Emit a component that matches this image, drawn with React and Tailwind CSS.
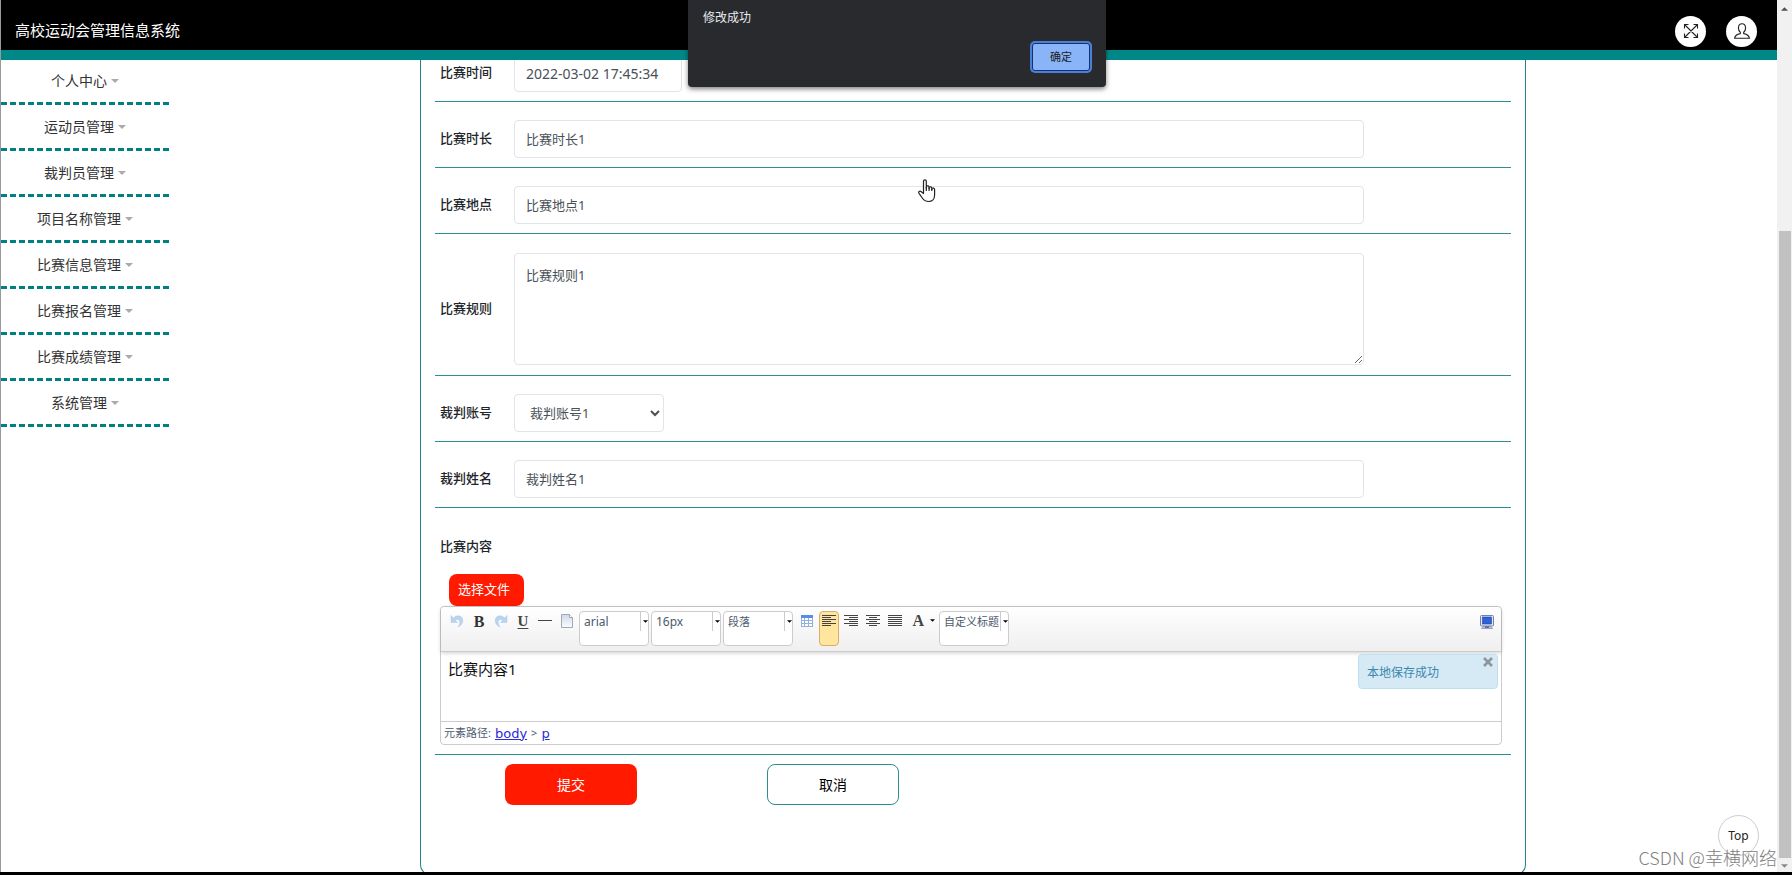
import React from "react";

const MENU = [
  "个人中心",
  "运动员管理",
  "裁判员管理",
  "项目名称管理",
  "比赛信息管理",
  "比赛报名管理",
  "比赛成绩管理",
  "系统管理",
];

function Caret({ className }) {
  return (
    <svg viewBox="0 0 8 4" className={className} fill="currentColor" aria-hidden="true">
      <path d="M0 0h8L4 4z" />
    </svg>
  );
}

function Header() {
  return (
    <header className="flex h-[60px] shrink-0 items-center justify-between border-b-[10px] border-[#008888] bg-black pt-[10px] pr-5 pl-[14px]">
      <h1 className="text-[15px] text-white">高校运动会管理信息系统</h1>
      <div className="flex items-center gap-5 pt-[2px]">
        <button aria-label="全屏" className="flex size-[31px] items-center justify-center rounded-full bg-white">
          <svg viewBox="0 0 16 16" className="size-4" fill="none" stroke="#222" strokeWidth="1.1">
            <path d="M1.5 1.5l13 13M14.5 1.5l-13 13M1.5 5.5v-4h4M10.5 1.5h4v4M14.5 10.5v4h-4M5.500 14.500h-4v-4" />
          </svg>
        </button>
        <button aria-label="用户" className="flex size-[31px] items-center justify-center rounded-full bg-white">
          <svg viewBox="0 0 16 16" className="size-4" fill="none" stroke="#222" strokeWidth="1.1">
            <path d="M6.300 9.300C5 8.300 4.300 6.500 4.500 4.300 4.700 1.800 6 .8 8 .8s3.300 1 3.500 3.500c.2 2.200-.5 4-1.800 5v1.300c3.500.7 5.300 2 5.700 4.600H.6c.4-2.600 2.200-3.900 5.700-4.600z" />
          </svg>
        </button>
      </div>
    </header>
  );
}

function Sidebar() {
  return (
    <nav className="-mt-px w-[168px] shrink-0">
      <ul>
        {MENU.map((m) => (
          <li key={m} className="h-[46px] border-b-[3px] border-dashed border-[#008080]">
            <button className="flex h-full w-full items-center justify-center gap-1 text-[14px] text-[#333]">
              {m}
              <Caret className="h-1 w-2 text-[#aaa]" />
            </button>
          </li>
        ))}
      </ul>
    </nav>
  );
}

const FIELD = "rounded border border-[#e2e4e8] bg-white px-[11px] text-[#495057] outline-none";

function Row({ id, label, tall, children }) {
  return (
    <div
      className={
        "flex shrink-0 items-center border-b border-[#2b8f8f] pt-[18px] pr-[147px] pb-[9px] pl-[5px] " +
        (tall ? "h-[142px]" : "h-[66px]")
      }
    >
      <label htmlFor={id} className="w-[74px] shrink-0 text-[13px] font-medium text-[#212529]">
        {label}
      </label>
      {children}
    </div>
  );
}

function Combo({ label, value, textSize = "text-[12px]" }) {
  return (
    <div className="mr-0.5 flex h-[35px] w-[70px] shrink-0 items-start rounded-sm border border-[#ccc] bg-white">
      <select
        aria-label={label}
        className={"h-[19px] w-[60px] appearance-none overflow-hidden bg-transparent pl-1 leading-[19px] text-[#4b5a6e] outline-none " + textSize}
      >
        <option>{value}</option>
      </select>
      <span className="flex h-[19px] w-2 shrink-0 items-center justify-end border-l border-[#ccc]">
        <Caret className="h-[3px] w-[5px] text-black" />
      </span>
    </div>
  );
}

function Tool({ label, active, children }) {
  return (
    <button
      type="button"
      aria-label={label}
      className={
        "mr-[2px] flex h-[35px] w-5 shrink-0 items-start justify-center rounded-sm border pt-[2px] " +
        (active ? "border-[#dcac6c] bg-[#ffe69f]" : "border-transparent")
      }
    >
      {children}
    </button>
  );
}

function Lines({ d }) {
  return (
    <svg viewBox="0 0 14 14" className="size-[14px]" stroke="#444" strokeWidth="1" fill="none" shapeRendering="crispEdges">
      <path d={d} />
    </svg>
  );
}

function UndoShape() {
  return <path d="M1 1.500v7h6.500L5.300 6.200C7.500 4.500 10 5.600 9.800 8.500 9.700 10.500 9 11.800 8 13c3-1.300 4.800-3.500 4.800-6.500C12.800 1.600 7.300.3 3.300 4z" fill="#b9d4f1" stroke="#9fc0e6" strokeWidth=".4" />;
}

function Toolbar() {
  return (
    <div className="flex h-[45px] items-start rounded-t border-b border-[#ccc] bg-linear-to-b from-white to-[#efefef] pt-1 pr-[7px] pl-[6px] shadow-[0_1px_4px_rgba(0,0,0,0.2)]">
      <Tool label="撤销">
        <svg viewBox="0 0 14 14" className="size-[14px]"><UndoShape /></svg>
      </Tool>
      <Tool label="加粗">
        <span className="font-['Liberation_Serif',serif] text-[16px] leading-[15px] font-bold text-[#333]">B</span>
      </Tool>
      <Tool label="重做">
        <svg viewBox="0 0 14 14" className="size-[14px]"><g transform="matrix(-1 0 0 1 14 0)"><UndoShape /></g></svg>
      </Tool>
      <Tool label="下划线">
        <span className="font-['Liberation_Serif',serif] text-[15px] leading-[15px] font-bold text-[#444] underline underline-offset-2">U</span>
      </Tool>
      <Tool label="分隔线"><Lines d="M0 6.500h14" /></Tool>
      <Tool label="清空文档">
        <svg viewBox="0 0 14 14" className="size-[14px]">
          <defs>
            <linearGradient id="doc" x1="0" y1="0" x2="0" y2="1">
              <stop offset="0" stopColor="#cfd9ea" />
              <stop offset="1" stopColor="#fbfcfe" />
            </linearGradient>
          </defs>
          <path d="M1.500.5h8l3 3v10h-11z" fill="url(#doc)" stroke="#a3a8b3" />
          <path d="M9.500.5v3h3" fill="#fff" stroke="#a3a8b3" />
        </svg>
      </Tool>
      <Combo label="字体" value="arial" />
      <Combo label="字号" value="16px" />
      <Combo label="段落格式" value="段落" textSize="text-[11px]" />
      <span className="w-[2px] shrink-0" />
      <Tool label="插入表格">
        <svg viewBox="0 0 14 14" className="size-[14px]" shapeRendering="crispEdges">
          <path d="M1 1h12v12H1z" fill="#fff" />
          <path d="M1 6.500h12M1 9.500h12M4.500 4v9M8.500 4v9M1.500 3v10M1 12.500h12M12.500 3v10" stroke="#8fb0e0" fill="none" />
          <path d="M1 1h12v3H1z" fill="#5b8be6" />
        </svg>
      </Tool>
      <Tool label="左对齐" active><Lines d="M0 1.500h14M0 3.500h9M0 5.500h14M0 7.500h9M0 9.500h14M0 11.500h9" /></Tool>
      <Tool label="右对齐"><Lines d="M0 1.500h14M5 3.500h9M0 5.500h14M5 7.500h9M0 9.500h14M5 11.500h9" /></Tool>
      <Tool label="居中"><Lines d="M0 1.500h14M3 3.500h8M0 5.500h14M3 7.500h8M0 9.500h14M3 11.500h8" /></Tool>
      <Tool label="两端对齐"><Lines d="M0 1.500h14M0 3.500h14M0 5.500h14M0 7.500h14M0 9.500h14M0 11.500h14" /></Tool>
      <button type="button" aria-label="字体颜色" className="mr-1 flex h-[19px] w-[28px] shrink-0 items-center justify-end gap-1.5 font-['Liberation_Serif',serif] text-[16px] leading-[19px] font-bold text-[#444]">
        A
        <Caret className="h-[3px] w-[5px] text-black" />
      </button>
      <Combo label="自定义标题" value="自定义标题" textSize="text-[11px]" />
      <button type="button" aria-label="全屏编辑" className="ml-auto h-[18px] pt-[3px]">
        <svg viewBox="0 0 14 14" className="size-[14px]">
          <rect x=".5" y=".5" width="13" height="10.500" rx="1" fill="#e4e8f2" stroke="#7482a8" />
          <rect x="2.500" y="2" width="9" height="7" fill="#2f62d9" stroke="#2243a0" strokeWidth=".6" />
          <path d="M3 11.500h8l1.500 2h-11z" fill="#bcc4d6" stroke="#7482a8" strokeWidth=".6" />
          <path d="M5 12.200h4" stroke="#2243a0" />
        </svg>
      </button>
    </div>
  );
}

function Editor() {
  return (
    <div className="h-[139px] rounded border border-[#ccc] bg-white">
      <Toolbar />
      <div className="flex h-[69px] items-start justify-between pt-[2px] pr-[3px] pl-[7px]">
        <p className="pt-[3px] text-[15px] leading-6 text-[#111]">比赛内容1</p>
        <div className="flex h-[35px] w-[140px] items-start justify-between rounded-sm border border-[#bce0f0] bg-[#d6eaf6] pr-[4px] pl-2">
          <span className="text-[12px] leading-[35px] text-[#3a87ad]">本地保存成功</span>
          <button type="button" aria-label="关闭" className="pt-[2px]">
            <svg viewBox="0 0 10 10" className="size-[10px]" stroke="#8f9498" strokeWidth="2.600">
              <path d="M1 1l8 8M9 1l-8 8" />
            </svg>
          </button>
        </div>
      </div>
      <div className="flex h-[24px] items-center gap-1 border-t border-[#ccc] px-[3px] text-[11px] text-[#4b5a6e]">
        <span>元素路径:</span>
        <a href="#body" className="font-['DejaVu_Sans',sans-serif] text-[13px] text-[#2a2ad8] underline">body</a>
        <span>&gt;</span>
        <a href="#p" className="font-['DejaVu_Sans',sans-serif] text-[13px] text-[#2a2ad8] underline">p</a>
      </div>
    </div>
  );
}

function Panel() {
  return (
    <form className="mx-[251px] -mt-[24px] -mb-[3px] flex flex-1 flex-col rounded-b-[10px] border-x border-b border-[#2b8080] px-[14px]">
      <Row id="time" label="比赛时间">
        <input id="time" defaultValue="2022-03-02 17:45:34" className={"h-[38px] w-[168px] text-[14px] " + FIELD} />
      </Row>
      <Row id="duration" label="比赛时长">
        <input id="duration" defaultValue="比赛时长1" className={"h-[38px] min-w-0 flex-1 pb-[2px] text-[13px] " + FIELD} />
      </Row>
      <Row id="place" label="比赛地点">
        <input id="place" defaultValue="比赛地点1" className={"h-[38px] min-w-0 flex-1 pb-[2px] text-[13px] " + FIELD} />
      </Row>
      <Row id="rules" label="比赛规则" tall>
        <textarea id="rules" defaultValue="比赛规则1" className={"h-[112px] min-w-0 flex-1 resize pt-3 text-[13px] " + FIELD} />
      </Row>
      <Row id="account" label="裁判账号">
        <select id="account" className={"h-[38px] w-[150px] text-[13px] " + FIELD}>
          <option>裁判账号1</option>
        </select>
      </Row>
      <Row id="judge" label="裁判姓名">
        <input id="judge" defaultValue="裁判姓名1" className={"h-[38px] min-w-0 flex-1 pb-[2px] text-[13px] " + FIELD} />
      </Row>
      <div className="shrink-0 border-b border-[#2b8f8f] pt-[28px] pr-[9px] pb-[9px] pl-[5px]">
        <div className="text-[13px] leading-5 font-medium text-[#212529]">比赛内容</div>
        <button type="button" className="mt-[18px] ml-[9px] block h-8 w-[75px] rounded-lg bg-[#ff1a00] pl-[9px] text-left text-[13px] text-white">
          选择文件
        </button>
        <Editor />
      </div>
      <div className="mt-[9px] flex gap-[130px] pl-[70px]">
        <button type="button" className="h-[41px] w-[132px] rounded-lg bg-[#ff1a00] text-[14px] text-white">提交</button>
        <button type="button" className="h-[41px] w-[132px] rounded-lg border border-[#2b8f8f] bg-white text-[14px] text-black">取消</button>
      </div>
    </form>
  );
}

function Scrollbar() {
  return (
    <div className="flex w-[15px] shrink-0 flex-col items-center bg-[#f1f1f1] pt-[7px] pb-[4px]">
      <Caret className="h-1 w-[7px] rotate-180 text-[#505050]" />
      <div className="mt-[220px] mb-[6px] w-3 flex-1 bg-[#c1c1c1]" />
      <Caret className="h-1 w-[7px] text-[#888]" />
    </div>
  );
}

function Dialog() {
  return (
    <div role="alertdialog" aria-label="修改成功" className="absolute top-0 left-[688px] flex h-[87px] w-[418px] flex-col justify-between rounded-b bg-[#292a2d] pt-2 pr-[16px] pb-[16px] pl-[15px] shadow-[0_2px_5px_rgba(0,0,0,0.5)]">
      <p className="text-[12px] leading-5 text-[#e8eaed]">修改成功</p>
      <button className="h-[28px] w-[58px] self-end rounded-[3px] border border-[#17306b] bg-[#8ab4f8] text-[11px] text-[#202124] ring-2 ring-[#4a80d8]">
        确定
      </button>
    </div>
  );
}

export default function App() {
  return (
    <div className="relative flex h-screen flex-col overflow-hidden bg-white font-['Noto_Sans','Noto_Sans_CJK_SC',sans-serif]">
      <div className="flex min-h-0 flex-1">
        <div className="flex min-w-0 flex-1 flex-col border-l border-[#999]">
          <Header />
          <main className="flex min-h-0 flex-1 overflow-hidden">
            <Sidebar />
            <div className="flex min-w-0 flex-1 flex-col">
              <Panel />
            </div>
          </main>
        </div>
        <Scrollbar />
      </div>
      <div className="h-[3px] shrink-0 bg-black" />
      <Dialog />
      <svg viewBox="0 0 18 24" className="absolute top-[179px] left-[918px] h-6 w-[18px]" fill="#fff" stroke="#222" strokeWidth="1.200" strokeLinejoin="round">
        <path d="M5.500 14.500V2.200C5.500.4 8.300.4 8.300 2.200V9 7.500c.8-1 2.600-.7 2.800.6V9.500 8.300c.8-.9 2.400-.6 2.700.5V10.500 9.400c.9-.8 2.800-.3 2.800 1.200V16c0 4-2.500 6.500-6 6.500-3.300 0-4.800-1.300-6.300-3.500L1 14.300c-.9-1.500.7-2.600 2-1.800z" />
        <path d="M8.300 8v4M11.100 8.500V12M13.800 9.500V12" fill="none" />
      </svg>
      <button className="absolute right-[33px] bottom-[19px] size-[41px] rounded-full border border-[#ccc] bg-white text-[12px] text-[#222]">Top</button>
      <div className="absolute right-[15px] bottom-[6px] font-['Noto_Sans_CJK_SC',sans-serif] text-[18px] leading-6 font-light text-[#808080]">CSDN @幸横网络</div>
    </div>
  );
}
